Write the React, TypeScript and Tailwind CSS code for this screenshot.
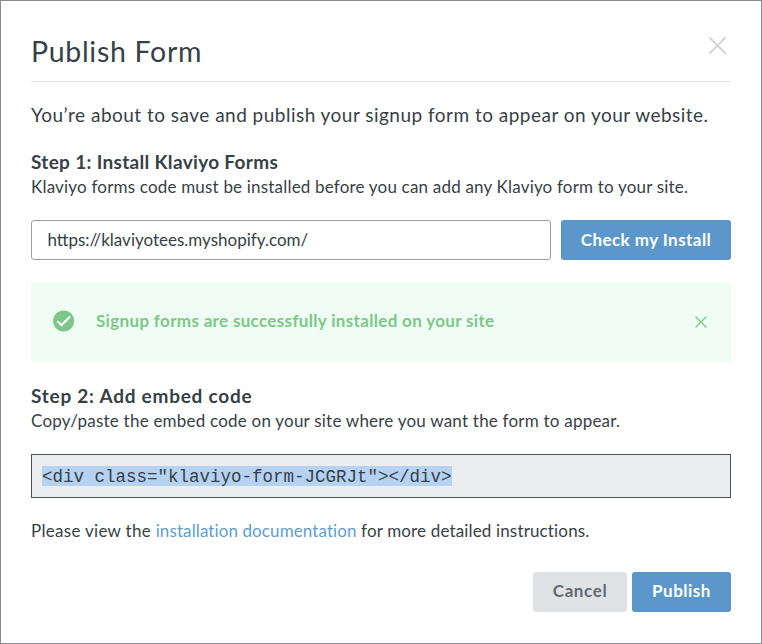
import React from 'react';

interface CloseIconProps {
    size: number;
    strokeWidth: number;
}

const CloseIcon = ({size, strokeWidth}: CloseIconProps) => {
    const end = size - 1;
    return (
        <svg width={size} height={size} viewBox={`0 0 ${size} ${size}`} fill="none" stroke="currentColor" strokeWidth={strokeWidth} strokeLinecap="round">
            <path d={`M1 1L${end} ${end}M${end} 1L1 ${end}`} />
        </svg>
    );
}

const CheckIcon = () => (
    <svg width="22" height="22" viewBox="0 0 22 22" fill="none">
        <circle cx="10.7" cy="11" r="10.6" fill="#7dc888" />
        <path d="M4.3 11.2L8.6 15.1L17 6.4" stroke="#fff" strokeWidth="2.1" />
    </svg>
);

interface StepHeadingProps {
    title: string;
    description: string;
    titleClass: string;
    descriptionClass: string;
}

const StepHeading = ({title, description, titleClass, descriptionClass}: StepHeadingProps) => (
    <div className="whitespace-nowrap">
        <h2 className={`h-[25px] text-[19px] leading-6 font-bold ${titleClass}`}>{title}</h2>
        <p className={`h-6 text-[17px] leading-6 ${descriptionClass}`}>{description}</p>
    </div>
);

export default function App() {
    const [siteUrl, setSiteUrl] = React.useState('https://klaviyotees.myshopify.com/');
    const [showNotice, setShowNotice] = React.useState(true);

    return (
        <div className="flex h-[644px] w-[762px] flex-col border border-[#888b96] bg-white px-[30px] font-['Lato',sans-serif] text-[#373f47]">
            <header className="flex h-[81px] shrink-0 justify-between border-b border-[#e1e4e6]">
                <h1 className="pt-[32px] text-[28.5px] leading-9 tracking-[0.7px]">Publish Form</h1>
                <button type="button" aria-label="Close" className="mt-[36px] mr-[5.5px] h-[17px] text-[#d0d3d5]">
                    <CloseIcon size={17} strokeWidth={1.8} />
                </button>
            </header>

            <p className="mt-[19px] h-7 shrink-0 whitespace-nowrap text-[19px] leading-7 tracking-[0.48px]">You’re about to save and publish your signup form to appear on your website.</p>

            <div className="mt-[21px] shrink-0">
                <StepHeading
                    title="Step 1: Install Klaviyo Forms"
                    description="Klaviyo forms code must be installed before you can add any Klaviyo form to your site."
                    titleClass="tracking-[0.32px]"
                    descriptionClass="tracking-[0.19px]"
                />
            </div>

            <div className="mt-[21px] flex h-10 shrink-0 gap-[10px]">
                <input
                    type="text"
                    value={siteUrl}
                    onChange={(e) => setSiteUrl(e.target.value)}
                    className="w-[520px] rounded-[3px] border border-[#9b9fa5] px-[15.5px] text-[17px] outline-none"
                />
                <button type="button" className="w-[170px] rounded-[3px] bg-[#5b97ca] text-[17px] font-bold tracking-[0.45px] text-white">Check my Install</button>
            </div>

            {showNotice && (
                <div className="mt-[22px] flex h-20 shrink-0 items-center bg-[#effdf5] pr-[24px] pb-[2px] pl-[22px] text-[#7dc888]">
                    <CheckIcon />
                    <span className="ml-[21px] flex-1 text-[17px] font-bold tracking-[0.33px]">Signup forms are successfully installed on your site</span>
                    <button type="button" aria-label="Dismiss" className="pt-[2px]" onClick={() => setShowNotice(false)}>
                        <CloseIcon size={12} strokeWidth={1.4} />
                    </button>
                </div>
            )}

            <div className="mt-[22px] shrink-0">
                <StepHeading
                    title="Step 2: Add embed code"
                    description="Copy/paste the embed code on your site where you want the form to appear."
                    titleClass="tracking-[0.75px]"
                    descriptionClass="tracking-[0.22px]"
                />
            </div>

            <div className="mt-[21px] flex h-11 shrink-0 items-center border border-[#4b5259] bg-[#ecedef] px-[10px]">
                <code className="h-5 bg-[#b5d2f3] font-['Liberation_Mono',monospace] text-[17.5px] leading-[23px]">{'<div class="klaviyo-form-JCGRJt"></div>'}</code>
            </div>

            <p className="mt-[21px] h-6 shrink-0 whitespace-nowrap text-[17px] leading-6 tracking-[0.15px]">
                <span className="tracking-[0.3px]">Please view the </span>
                <a href="#" className="tracking-[0.1px] text-[#5f9dd0]">installation documentation</a> for more detailed instructions.
            </p>

            <footer className="mt-[29px] flex h-10 shrink-0 justify-end gap-[5px] text-[17px] font-bold">
                <button type="button" className="w-[94px] rounded-[3px] bg-[#dfe3e6] pb-[2px] tracking-[0.6px] text-[#646a72]">Cancel</button>
                <button type="button" className="w-[99px] rounded-[3px] bg-[#5b97ca] pb-[2px] tracking-[0.5px] text-white">Publish</button>
            </footer>
        </div>
    );
}
